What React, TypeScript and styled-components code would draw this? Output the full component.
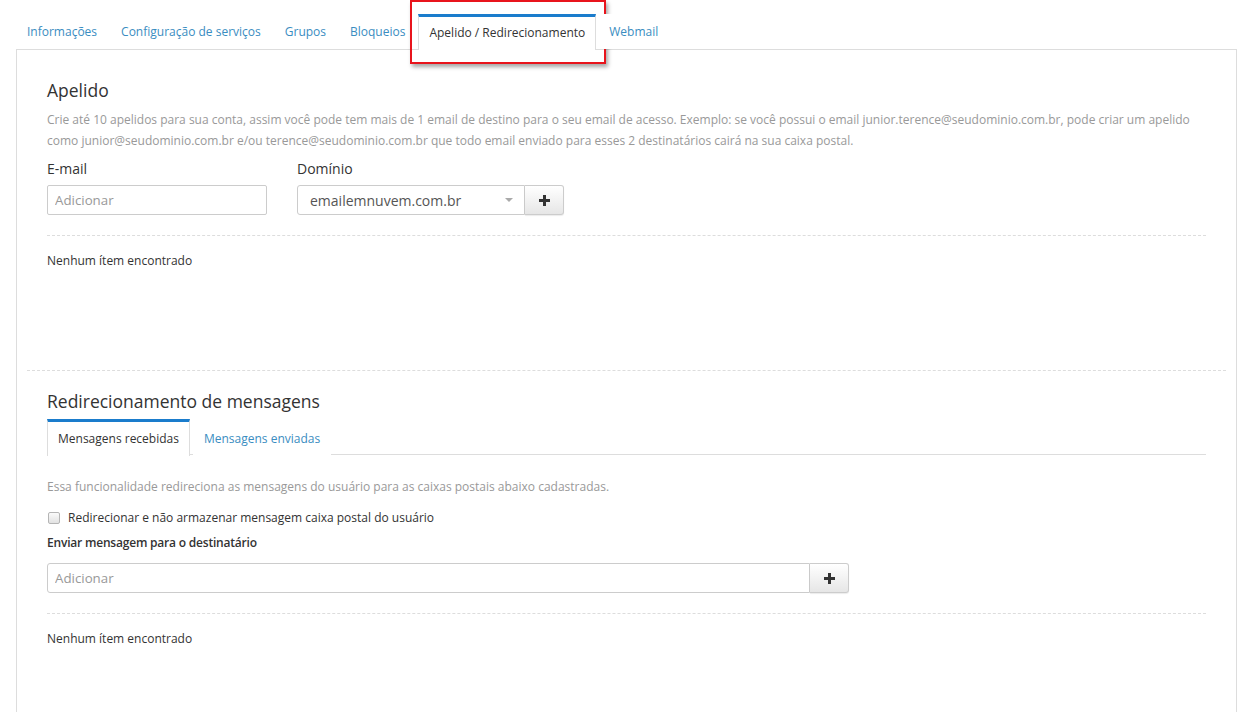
import React, { useState } from 'react'
import styled, { createGlobalStyle } from 'styled-components'

const GlobalStyle = createGlobalStyle`
  body {
    margin: 0;
    background: #fff;
    font-family: "Open Sans", "Liberation Sans", sans-serif;
    color: #333;
  }
  * { box-sizing: border-box; }
`

const Page = styled.div`
  padding: 14px 10px 0 16px;
`

const TabBar = styled.ul`
  display: flex;
  list-style: none;
  margin: 0;
  padding: 0;
  height: 35px;
  align-items: flex-end;
`

const Tab = styled.li<{ $active?: boolean }>`
  position: relative;
  margin-right: 2px;
  padding: 0 10px 3px;
  display: flex;
  align-items: center;
  font-size: 12px;
  color: ${p => (p.$active ? '#333' : '#3a8dc1')};
  background: #fff;
  border-top: 3px solid ${p => (p.$active ? '#1a7ccc' : 'transparent')};
  border-left: 1px solid ${p => (p.$active ? '#ddd' : 'transparent')};
  border-right: 1px solid ${p => (p.$active ? '#ddd' : 'transparent')};
  margin-bottom: ${p => (p.$active ? '-1px' : '0')};
  height: ${p => (p.$active ? '36px' : '35px')};
  z-index: 1;
  cursor: pointer;
`

const Highlight = styled.span`
  position: absolute;
  left: -9px;
  right: -11px;
  top: -17px;
  bottom: -14px;
  border: 2px solid #e8141c;
  box-shadow: 2px 3px 4px rgba(0, 0, 0, 0.35);
  pointer-events: none;
`

const Panel = styled.div`
  border: 1px solid #ddd;
  border-bottom: none;
  padding: 27px 30px 60px;
  min-height: 663px;
`

const Heading = styled.h2<{ $gap?: number }>`
  font-size: 17.5px;
  font-weight: 400;
  margin: 0 0 ${p => p.$gap ?? 5}px;
  line-height: 26px;
  color: #333;
`

const Muted = styled.p<{ $top?: number }>`
  font-size: 12px;
  line-height: 21px;
  color: #999;
  margin: ${p => p.$top ?? 0}px 0 0;
`

const FieldRow = styled.div`
  display: flex;
  gap: 30px;
  margin-top: 8px;
`

const Field = styled.div`
  display: flex;
  flex-direction: column;
`

const Label = styled.label<{ $strong?: boolean }>`
  font-size: ${p => (p.$strong ? '12px' : '14px')};
  font-weight: ${p => (p.$strong ? 600 : 400)};
  letter-spacing: ${p => (p.$strong ? '-0.2px' : '0')};
  line-height: 20px;
  margin-bottom: 6px;
  color: #333;
`

const Input = styled.input<{ $grow?: boolean; $joined?: boolean }>`
  width: ${p => (p.$grow ? 'auto' : '220px')};
  flex: ${p => (p.$grow ? '0 0 763px' : 'none')};
  height: 30px;
  border: 1px solid #ccc;
  border-radius: ${p => (p.$joined ? '3px 0 0 3px' : '2px')};
  padding: 0 7px;
  font-family: inherit;
  font-size: 13.3px;
  color: #555;
  outline: none;
  &::placeholder { color: #999; }
`

const Group = styled.div<{ $top?: number }>`
  display: flex;
  margin-top: ${p => p.$top ?? 0}px;
`

const Select = styled.div`
  width: 228px;
  height: 30px;
  border: 1px solid #ccc;
  border-radius: 3px 0 0 3px;
  display: flex;
  align-items: center;
  justify-content: space-between;
  padding: 0 11px 0 12px;
  font-size: 14px;
  color: #555;
`

const Caret = styled.span`
  width: 0;
  height: 0;
  border-left: 4px solid transparent;
  border-right: 4px solid transparent;
  border-top: 4px solid #aaa;
`

const AddButton = styled.button`
  width: 39px;
  height: 30px;
  border: 1px solid #ccc;
  border-left: none;
  border-radius: 0 3px 3px 0;
  background: linear-gradient(#fff, #e6e6e6);
  box-shadow: 0 1px 1px rgba(0, 0, 0, 0.08);
  display: flex;
  align-items: center;
  justify-content: center;
  padding: 0;
  cursor: pointer;
`

const Divider = styled.hr<{ $wide?: boolean }>`
  border: none;
  border-top: 1px dashed #ddd;
  margin: ${p => (p.$wide ? '0 -20px' : '0')};
`

const Empty = styled.div<{ $tall?: boolean }>`
  font-size: 12px;
  color: #333;
  line-height: 18px;
  padding-top: 16px;
  height: ${p => (p.$tall ? '134px' : 'auto')};
`

const Section = styled.section<{ $gap: number }>`
  margin-top: ${p => p.$gap}px;
`

const SubTabs = styled.div`
  display: flex;
  border-bottom: 1px solid #ddd;
  height: 36px;
  margin-top: 2px;
`

const SubTab = styled.div<{ $active?: boolean }>`
  padding: 0 10px 2px;
  margin-right: 3px;
  display: flex;
  align-items: center;
  font-size: 12px;
  color: ${p => (p.$active ? '#333' : '#3a8dc1')};
  border-top: 3px solid ${p => (p.$active ? '#1a7ccc' : 'transparent')};
  border-left: 1px solid ${p => (p.$active ? '#ddd' : 'transparent')};
  border-right: 1px solid ${p => (p.$active ? '#ddd' : 'transparent')};
  background: #fff;
  height: 37px;
  margin-bottom: -1px;
  cursor: pointer;
`

const CheckRow = styled.label`
  display: flex;
  align-items: center;
  gap: 8px;
  font-size: 12px;
  color: #333;
  margin: 12px 0 3px;
  line-height: 18px;
`

const Box = styled.span`
  width: 12px;
  height: 12px;
  border: 1px solid #b5b5b5;
  border-radius: 2px;
  background: linear-gradient(#fafafa, #e2e2e2);
  margin-left: 1px;
`

const Plus = () => (
  <svg width="11" height="11" viewBox="0 0 11 11">
    <path d="M4 0h3v4h4v3H7v4H4V7H0V4h4z" fill="#333" />
  </svg>
)

const tabs = ['Informações', 'Configuração de serviços', 'Grupos', 'Bloqueios', 'Apelido / Redirecionamento', 'Webmail']

export default function App() {
  const [sub, setSub] = useState(0)
  return (
    <Page>
      <GlobalStyle />
      <TabBar>
        {tabs.map((t, i) => (
          <Tab key={t} $active={i === 4}>
            {t}
            {i === 4 && <Highlight />}
          </Tab>
        ))}
      </TabBar>
      <Panel>
        <Heading $gap={6}>Apelido</Heading>
        <Muted>
          Crie até 10 apelidos para sua conta, assim você pode tem mais de 1 email de destino para o seu email de acesso. Exemplo: se você possui o email junior.terence@seudominio.com.br, pode criar um apelido como junior@seudominio.com.br e/ou terence@seudominio.com.br que todo email enviado para esses 2 destinatários cairá na sua caixa postal.
        </Muted>
        <FieldRow>
          <Field>
            <Label>E-mail</Label>
            <Input placeholder="Adicionar" />
          </Field>
          <Field>
            <Label>Domínio</Label>
            <Group>
              <Select>
                emailemnuvem.com.br
                <Caret />
              </Select>
              <AddButton><Plus /></AddButton>
            </Group>
          </Field>
        </FieldRow>
        <Section $gap={20}>
          <Divider />
          <Empty $tall>Nenhum ítem encontrado</Empty>
          <Divider $wide />
        </Section>
        <Section $gap={17}>
          <Heading>Redirecionamento de mensagens</Heading>
          <SubTabs>
            {['Mensagens recebidas', 'Mensagens enviadas'].map((t, i) => (
              <SubTab key={t} $active={sub === i} onClick={() => setSub(i)}>{t}</SubTab>
            ))}
          </SubTabs>
          <Muted $top={21}>
            Essa funcionalidade redireciona as mensagens do usuário para as caixas postais abaixo cadastradas.
          </Muted>
          <CheckRow>
            <Box />
            Redirecionar e não armazenar mensagem caixa postal do usuário
          </CheckRow>
          <Label $strong>Enviar mensagem para o destinatário</Label>
          <Group $top={10}>
            <Input $grow $joined placeholder="Adicionar" />
            <AddButton><Plus /></AddButton>
          </Group>
          <Section $gap={20}>
            <Divider />
            <Empty>Nenhum ítem encontrado</Empty>
          </Section>
        </Section>
      </Panel>
    </Page>
  )
}
